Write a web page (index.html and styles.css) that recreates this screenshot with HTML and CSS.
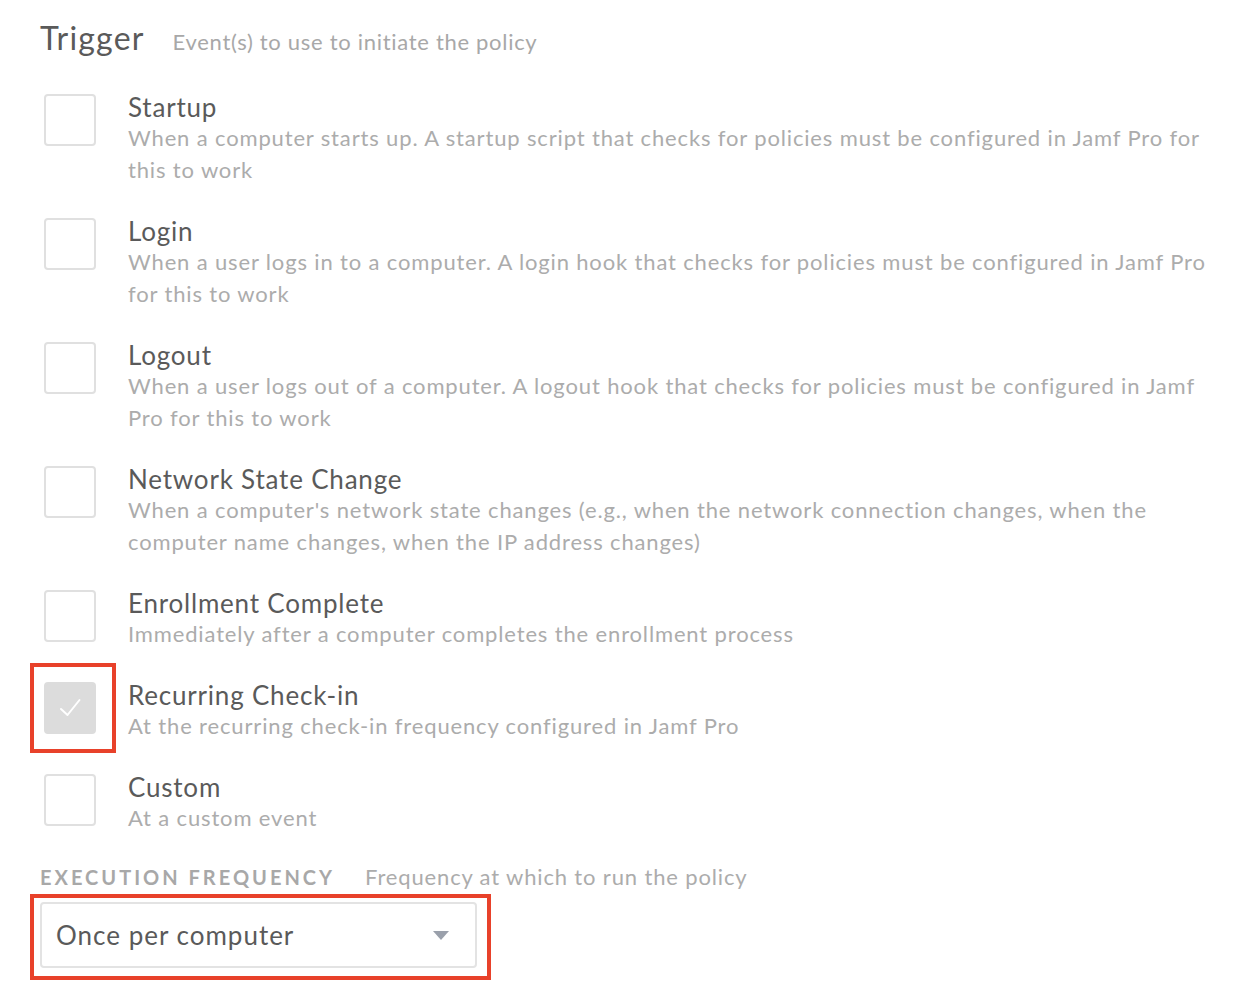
FILE: index.html
```html
<!DOCTYPE html>
<html>
<head>
<meta charset="utf-8">
<link rel="stylesheet" href="styles.css">
</head>
<body>
<div class="page">
  <div class="header">
    <h1 class="title">Trigger</h1>
    <span class="subtitle">Event(s) to use to initiate the policy</span>
  </div>
  <ul class="options">
    <li class="option">
      <span class="box"></span>
      <div class="text">
        <div class="label">Startup</div>
        <div class="desc">When a computer starts up. A startup script that checks for policies must be configured in Jamf Pro for this to work</div>
      </div>
    </li>
    <li class="option">
      <span class="box"></span>
      <div class="text">
        <div class="label">Login</div>
        <div class="desc">When a user logs in to a computer. A login hook that checks for policies must be configured in Jamf Pro for this to work</div>
      </div>
    </li>
    <li class="option">
      <span class="box"></span>
      <div class="text">
        <div class="label">Logout</div>
        <div class="desc">When a user logs out of a computer. A logout hook that checks for policies must be configured in Jamf Pro for this to work</div>
      </div>
    </li>
    <li class="option">
      <span class="box"></span>
      <div class="text">
        <div class="label">Network State Change</div>
        <div class="desc">When a computer's network state changes (e.g., when the network connection changes, when the computer name changes, when the IP address changes)</div>
      </div>
    </li>
    <li class="option">
      <span class="box"></span>
      <div class="text">
        <div class="label">Enrollment Complete</div>
        <div class="desc">Immediately after a computer completes the enrollment process</div>
      </div>
    </li>
    <li class="option">
      <span class="box checked highlight">
        <svg viewBox="0 0 52 52" width="52" height="52"><path d="M17 27 L23.5 33 L35.5 18" fill="none" stroke="#fff" stroke-width="2" stroke-linecap="round" stroke-linejoin="round"/></svg>
      </span>
      <div class="text">
        <div class="label">Recurring Check-in</div>
        <div class="desc">At the recurring check-in frequency configured in Jamf Pro</div>
      </div>
    </li>
    <li class="option">
      <span class="box"></span>
      <div class="text">
        <div class="label">Custom</div>
        <div class="desc">At a custom event</div>
      </div>
    </li>
  </ul>
  <div class="freq-header">
    <span class="freq-label">EXECUTION FREQUENCY</span>
    <span class="freq-sub">Frequency at which to run the policy</span>
  </div>
  <div class="select highlight-select">
    <span class="select-value">Once per computer</span>
    <span class="caret"></span>
  </div>
</div>
</body>
</html>
```

FILE: styles.css
```css
html, body {
  margin: 0;
  padding: 0;
  background: #fff;
}
body {
  font-family: Lato, "Liberation Sans", sans-serif;
  color: #555;
}
.page {
  padding: 16px 30px 22px 40px;
}
.header {
  display: flex;
  align-items: baseline;
  gap: 28px;
  height: 44px;
  line-height: 44px;
}
.title {
  margin: 0;
  font-size: 32px;
  font-weight: 400;
  letter-spacing: 1.2px;
  color: #5a5a5a;
}
.subtitle {
  font-size: 22px;
  letter-spacing: 0.7px;
  color: #a8a8a8;
}
.options {
  list-style: none;
  margin: 32px 0 0 0;
  padding: 0;
  display: flex;
  flex-direction: column;
  gap: 30px;
}
.option {
  display: flex;
  align-items: flex-start;
  gap: 32px;
  padding-left: 4px;
}
.box {
  position: relative;
  flex: none;
  width: 52px;
  height: 52px;
  margin-top: 2px;
  box-sizing: border-box;
  border: 2px solid #e0e0e0;
  border-radius: 4px;
  background: #fff;
}
.box.checked {
  background: #dcdcdc;
  border-color: #dcdcdc;
}
.box.checked svg {
  position: absolute;
  left: -2px;
  top: -2px;
}
.highlight::after {
  content: "";
  position: absolute;
  left: -16px;
  top: -21px;
  width: 86px;
  height: 90px;
  box-sizing: border-box;
  border: 4px solid #e8412a;
}
.text {
  flex: 1;
  min-width: 0;
}
.label {
  font-size: 26px;
  line-height: 30px;
  letter-spacing: 0.8px;
  color: #5a5a5a;
}
.desc {
  font-size: 22px;
  line-height: 32px;
  letter-spacing: 0.85px;
  color: #acacac;
}
.freq-header {
  margin-top: 28px;
  display: flex;
  align-items: baseline;
  gap: 30px;
  line-height: 30px;
}
.freq-label {
  font-size: 20px;
  font-weight: 700;
  letter-spacing: 3px;
  color: #a8a8a8;
}
.freq-sub {
  font-size: 22px;
  letter-spacing: 0.85px;
  color: #acacac;
}
.select {
  position: relative;
  margin-top: 10px;
  width: 437px;
  height: 66px;
  box-sizing: border-box;
  border: 2px solid #e3e3e3;
  border-radius: 4px;
  display: flex;
  align-items: center;
  justify-content: space-between;
  padding: 0 26px 0 14px;
}
.highlight-select::after {
  content: "";
  position: absolute;
  left: -12px;
  top: -10px;
  width: 461px;
  height: 86px;
  box-sizing: border-box;
  border: 4px solid #e8412a;
}
.select-value {
  font-size: 26px;
  letter-spacing: 1px;
  color: #5a5a5a;
}
.caret {
  width: 0;
  height: 0;
  border-left: 8px solid transparent;
  border-right: 8px solid transparent;
  border-top: 9px solid #9aa0ab;
}
```
